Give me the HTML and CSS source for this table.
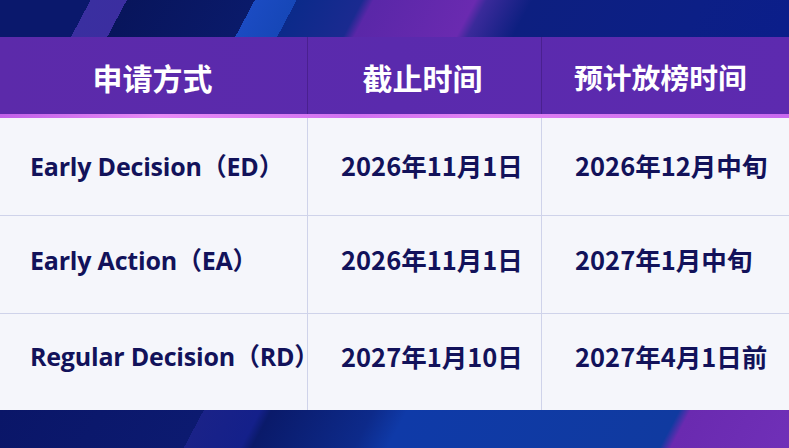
FILE: index.html
```html
<!DOCTYPE html>
<html lang="zh">
<head>
<meta charset="utf-8">
<link rel="stylesheet" href="styles.css">
</head>
<body>
<div class="page">
  <div class="band band-top"></div>
  <div class="table">
    <div class="row head">
      <div class="cell">申请方式</div>
      <div class="cell">截止时间</div>
      <div class="cell narrow">预计放榜时间</div>
    </div>
    <div class="glow"></div>
    <div class="row body r1">
      <div class="cell en">Early Decision（ED）</div>
      <div class="cell">2026年11月1日</div>
      <div class="cell">2026年12月中旬</div>
    </div>
    <div class="row body r2">
      <div class="cell en">Early Action（EA）</div>
      <div class="cell">2026年11月1日</div>
      <div class="cell">2027年1月中旬</div>
    </div>
    <div class="row body r3">
      <div class="cell en">Regular Decision（RD）</div>
      <div class="cell">2027年1月10日</div>
      <div class="cell">2027年4月1日前</div>
    </div>
  </div>
  <div class="band band-bottom"></div>
</div>
</body>
</html>
```
FILE: styles.css
```css
* { box-sizing: border-box; }
html, body { margin: 0; padding: 0; }
body {
  width: 789px;
  height: 448px;
  overflow: hidden;
  background: #0a1670;
  font-family: "Noto Sans CJK SC", "Noto Sans", sans-serif;
}
.page {
  display: flex;
  flex-direction: column;
  height: 448px;
}
.band { flex: none; }
.band-top {
  height: 37px;
  background:
    linear-gradient(118deg,
      #0a186c 0px, #0a186c 80px,
      #3a2fa0 80px, #3b2ea0 112px,
      #08155c 112px, #0a1a6a 225px,
      #1b4bc2 225px, #1647b8 262px,
      #0b2a8a 262px, #1a2a90 320px,
      #5a27a8 330px, #6a2ab0 420px,
      #3a2a9a 430px, #0d1f80 470px,
      #0c1f86 620px, #0a1d8e 789px);
}
.band-bottom {
  height: 38px;
  background:
    linear-gradient(118deg,
      #0a1668 0px, #0c1a70 180px,
      #1a2288 180px, #14208a 230px,
      #0a1a6a 240px, #0d2a8a 330px,
      #0f3aa8 360px, #103aa0 600px,
      #6a2ab0 610px, #7030b8 720px,
      #1a2ea8 730px, #1a30b0 789px);
}
.table {
  flex: 1;
  display: flex;
  flex-direction: column;
}
.row {
  display: grid;
  grid-template-columns: 307px 234px 1fr;
}
.cell {
  display: flex;
  align-items: center;
  white-space: nowrap;
}
.head {
  height: 77px;
  background: linear-gradient(90deg, #5c2aaa 0%, #5a2aad 50%, #5d2aaf 100%);
  color: #ffffff;
  font-size: 30px;
  font-weight: 700;
}
.head .cell { justify-content: center; padding-top: 2px; }
.head .cell:first-child { padding-right: 2px; }
.head .cell:nth-child(2) { padding-right: 4px; }
.head .cell.narrow { justify-content: flex-start; padding-left: 32px; font-size: 28.8px; }
.head .cell + .cell { border-left: 1px solid #4a2090; }
.glow {
  height: 4px;
  background: linear-gradient(90deg, #c060e8 0%, #e88af5 20%, #d070f0 45%, #e080f2 60%, #c868ee 100%);
}
.body {
  height: 98px;
  background: #f5f6fb;
  color: #12125a;
  font-size: 25.5px;
  font-weight: 700;
  border-bottom: 1px solid #cfd3ea;
}
.body.r3 { border-bottom: none; height: 96px; }
.body .cell + .cell { border-left: 1px solid #cfd3ea; }
.body .cell { padding-left: 33px; }
.r1 .cell { padding-bottom: 4px; }
.r2 .cell { padding-bottom: 12px; }
.r3 .cell { padding-bottom: 14px; }
.body .cell.en { padding-left: 30px; }
.en {
  font-family: "Open Sans", "Noto Sans CJK SC", sans-serif;
  font-size: 25px;
  letter-spacing: -0.2px;
}
```
